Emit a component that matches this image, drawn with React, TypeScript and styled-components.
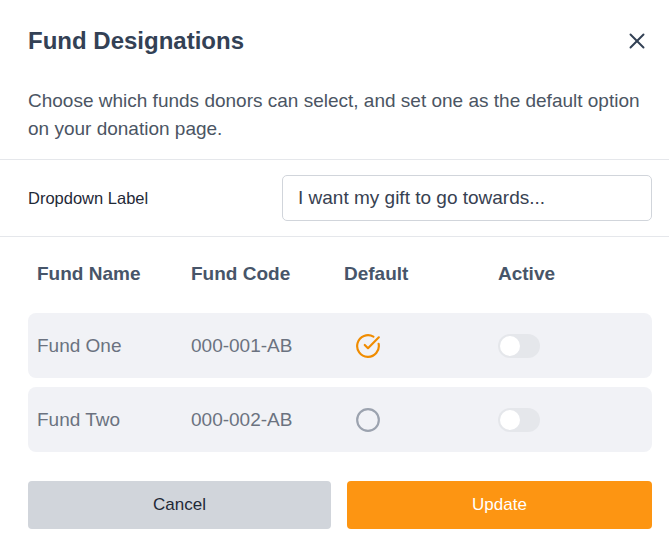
import { FC } from 'react';
import styled, { createGlobalStyle } from 'styled-components';
import { X, CircleCheckBig, Circle } from 'lucide-react';

type Fund = {
  name: string;
  code: string;
  isDefault: boolean;
  active: boolean;
};

const funds: Fund[] = [
  { name: 'Fund One', code: '000-001-AB', isDefault: true, active: false },
  { name: 'Fund Two', code: '000-002-AB', isDefault: false, active: false },
];

const GlobalStyle = createGlobalStyle`
  html, body {
    margin: 0;
    padding: 0;
    background: #fff;
    font-family: 'Liberation Sans', Arial, sans-serif;
  }
`;

const Modal = styled.div`
  width: 669px;
  height: 550px;
  background: #fff;
  box-sizing: border-box;
`;

const Header = styled.div`
  display: flex;
  align-items: center;
  justify-content: space-between;
  padding: 28px 19px 0 28px;
  height: 26px;
`;

const Title = styled.h2`
  margin: 0;
  font-size: 24px;
  font-weight: 700;
  color: #334155;
`;

const CloseButton = styled.button`
  display: flex;
  border: 0;
  background: none;
  padding: 0;
  color: #334155;
  cursor: pointer;
`;

const Description = styled.p`
  margin: 0;
  padding: 33px 20px 16px 28px;
  font-size: 19px;
  line-height: 28px;
  color: #4b5563;
`;

const Divider = styled.hr`
  margin: 0;
  border: 0;
  border-top: 1px solid #e5e7eb;
`;

const LabelRow = styled.div`
  display: flex;
  align-items: center;
  justify-content: space-between;
  padding: 15px 17px 15px 28px;
`;

const FieldLabel = styled.label`
  font-size: 16.5px;
  color: #1f2937;
`;

const TextInput = styled.input`
  width: 370px;
  height: 46px;
  box-sizing: border-box;
  border: 1px solid #d1d5db;
  border-radius: 5px;
  padding: 0 15px;
  font-family: inherit;
  font-size: 19px;
  color: #374151;
  outline: none;
`;

const Table = styled.div`
  display: flex;
  flex-direction: column;
  gap: 9px;
  padding: 17px 17px 0 28px;
`;

const Row = styled.div<{ $head?: boolean }>`
  display: grid;
  grid-template-columns: 154px 153px 154px 1fr;
  align-items: center;
  height: ${(p) => (p.$head ? '40px' : '65px')};
  padding: 0 9px;
  margin-bottom: ${(p) => (p.$head ? '10px' : '0')};
  border-radius: 8px;
  background: ${(p) => (p.$head ? 'transparent' : '#f1f2f6')};
  font-size: 19px;
  font-weight: ${(p) => (p.$head ? 700 : 400)};
  color: ${(p) => (p.$head ? '#475569' : '#6b7280')};
`;

const IconCell = styled.div`
  display: flex;
  padding-left: 11px;
`;

const Toggle = styled.span<{ $on: boolean }>`
  position: relative;
  display: block;
  width: 42px;
  height: 24px;
  border-radius: 12px;
  background: ${(p) => (p.$on ? '#fd9512' : '#e5e7eb')};

  &::after {
    content: '';
    position: absolute;
    top: 2px;
    left: ${(p) => (p.$on ? '20px' : '2px')};
    width: 20px;
    height: 20px;
    border-radius: 50%;
    background: #fff;
  }
`;

const ToggleCell = styled.div`
  display: flex;
  align-items: center;
`;

const Actions = styled.div`
  display: grid;
  grid-template-columns: 303px 305px;
  gap: 16px;
  padding: 29px 17px 0 28px;
`;

const Button = styled.button<{ $primary?: boolean }>`
  height: 48px;
  border: 0;
  border-radius: 4px;
  font-family: inherit;
  font-size: 17px;
  background: ${(p) => (p.$primary ? '#fd9512' : '#d1d5db')};
  color: ${(p) => (p.$primary ? '#fff' : '#1f2937')};
  cursor: pointer;
`;

const DefaultMark: FC<{ checked: boolean }> = ({ checked }) =>
  checked ? (
    <CircleCheckBig size={26} color="#f08c00" strokeWidth={2} />
  ) : (
    <Circle size={26} color="#9ca3af" strokeWidth={2} />
  );

export default function App() {
  return (
    <Modal>
      <GlobalStyle />
      <Header>
        <Title>Fund Designations</Title>
        <CloseButton aria-label="Close">
          <X size={26} strokeWidth={1.8} />
        </CloseButton>
      </Header>
      <Description>
        Choose which funds donors can select, and set one as the default option on your donation page.
      </Description>
      <Divider />
      <LabelRow>
        <FieldLabel>Dropdown Label</FieldLabel>
        <TextInput defaultValue="I want my gift to go towards..." />
      </LabelRow>
      <Divider />
      <Table>
        <Row $head>
          <span>Fund Name</span>
          <span>Fund Code</span>
          <span>Default</span>
          <span>Active</span>
        </Row>
        {funds.map((f) => (
          <Row key={f.code}>
            <span>{f.name}</span>
            <span>{f.code}</span>
            <IconCell>
              <DefaultMark checked={f.isDefault} />
            </IconCell>
            <ToggleCell>
              <Toggle $on={f.active} />
            </ToggleCell>
          </Row>
        ))}
      </Table>
      <Actions>
        <Button>Cancel</Button>
        <Button $primary>Update</Button>
      </Actions>
    </Modal>
  );
}
